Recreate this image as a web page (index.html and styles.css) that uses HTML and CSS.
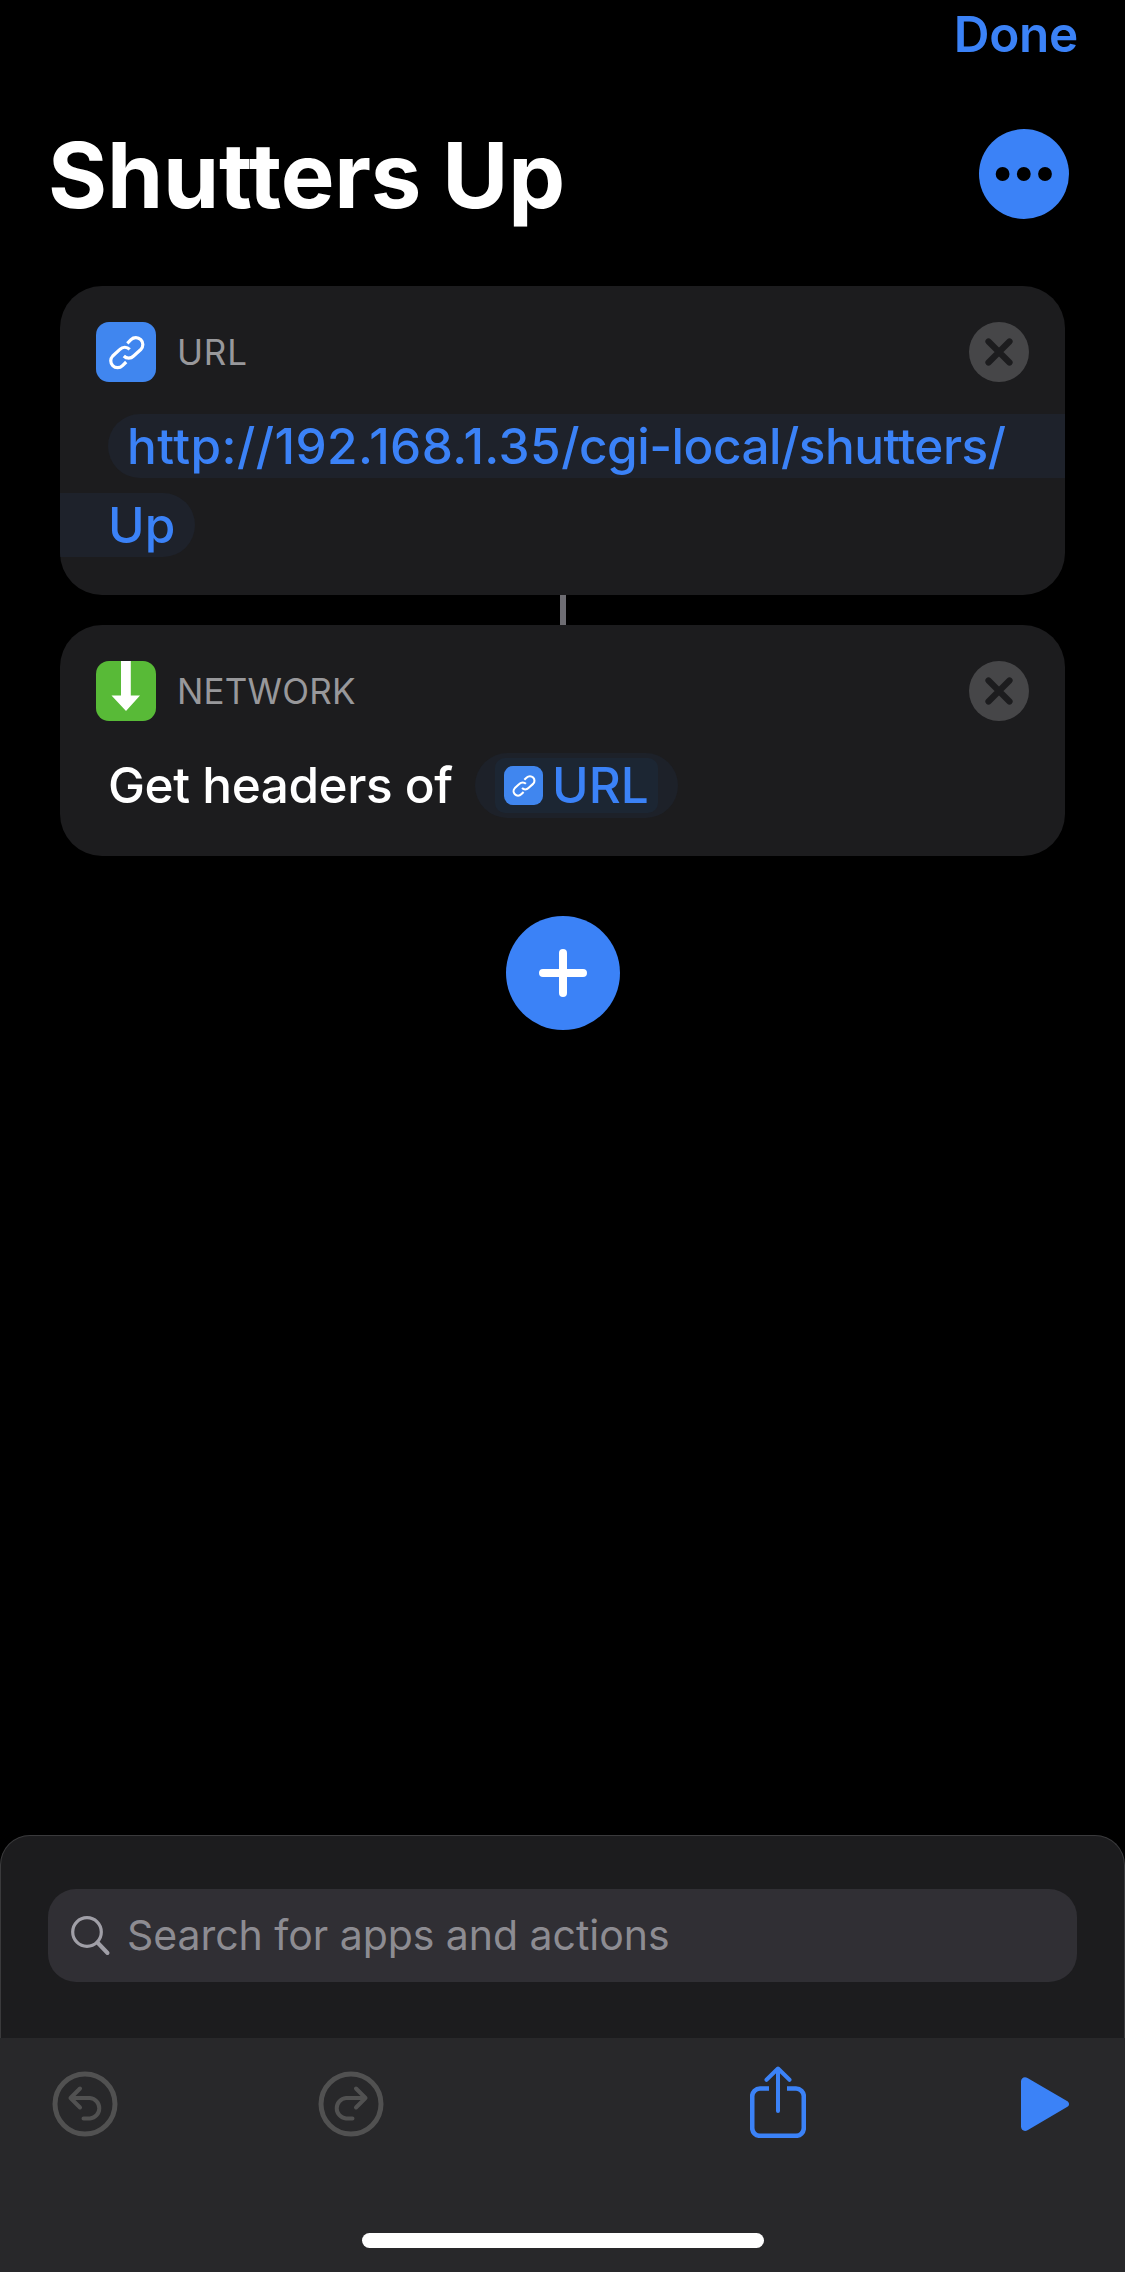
FILE: index.html
```html
<!DOCTYPE html>
<html lang="en">
<head>
<meta charset="utf-8">
<title>Shutters Up</title>
<link rel="stylesheet" href="styles.css">
</head>
<body>
<svg class="defs" width="0" height="0" aria-hidden="true">
  <symbol id="link" viewBox="0 0 60 60">
    <g fill="none" stroke="#fff" stroke-width="3.2" stroke-linejoin="round">
      <path d="M31.3 21.3L35 17.7a6.9 6.9 0 0 1 9.8 0a6.9 6.9 0 0 1 0 9.8L37.6 34a6.9 6.9 0 0 1-9.8 0"/>
      <path d="M33.7 27.3a6.9 6.9 0 0 0-9.8 0L16.7 34a6.9 6.9 0 0 0 0 9.6a6.9 6.9 0 0 0 9.8 0L30.2 40"/>
    </g>
  </symbol>
  <symbol id="close" viewBox="0 0 60 60">
    <circle cx="30" cy="30" r="30" fill="#464648"/>
    <path d="M19.5 19.5L40.5 40.5M40.5 19.5L19.5 40.5" stroke="#1c1c1e" stroke-width="6.2" stroke-linecap="round"/>
  </symbol>
  <symbol id="undo" viewBox="0 0 66 66">
    <g fill="none" stroke="#515151" stroke-linecap="round" stroke-linejoin="round">
      <circle cx="33" cy="33" r="30" stroke-width="5"/>
      <path d="M28 17.5L18.5 27L28 36.5M18.5 27H38a10.3 10.3 0 0 1 0 20.5H31.5" stroke-width="4"/>
    </g>
  </symbol>
</svg>
<div class="screen">
  <div class="nav"><span class="done">Done</span></div>
  <header class="header">
    <h1 class="title">Shutters Up</h1>
    <svg class="more" viewBox="0 0 90 90"><circle cx="45" cy="45" r="45" fill="#3b82f7"/><circle cx="23.6" cy="45" r="6.9"/><circle cx="44.8" cy="45" r="6.9"/><circle cx="66" cy="45" r="6.9"/></svg>
  </header>
  <main class="actions">
    <section class="card card-url">
      <div class="card-head">
        <svg class="app-icon blue"><use href="#link"/></svg>
        <span class="label label-url">URL</span>
        <svg class="close"><use href="#close"/></svg>
      </div>
      <div class="token-line start"><span class="host">http://192.168.1.35</span><span class="path">/cgi-local/shutters/</span></div>
      <div class="token-line end">Up</div>
    </section>
    <div class="connector"></div>
    <section class="card card-network">
      <div class="card-head">
        <svg class="app-icon green" viewBox="0 0 60 60"><path d="M25 0H34.8V34.5H44L30 50L15.5 34.5H25Z" fill="#fff"/></svg>
        <span class="label">NETWORK</span>
        <svg class="close"><use href="#close"/></svg>
      </div>
      <div class="sentence">
        <span class="verb">Get headers of</span>
        <span class="pill"><span class="pill-inner"><svg class="mini-icon"><use href="#link"/></svg><span>URL</span></span></span>
      </div>
    </section>
    <svg class="add" viewBox="0 0 114 114"><circle cx="57" cy="57" r="57" fill="#3b82f7"/><path d="M57 37V77M37 57H77" stroke="#fff" stroke-width="8" stroke-linecap="round"/></svg>
  </main>
  <section class="sheet">
    <div class="search">
      <svg class="glass" viewBox="0 0 40 40" fill="none" stroke="#a09fa7"><circle cx="16" cy="16" r="14.3" stroke-width="3.2"/><path d="M26.5 26.5L36.500 37" stroke-width="4" stroke-linecap="round"/></svg>
      <span class="placeholder">Search for apps and actions</span>
    </div>
  </section>
  <footer class="toolbar">
    <svg class="tool"><use href="#undo"/></svg>
    <svg class="tool redo"><use href="#undo"/></svg>
    <svg class="share" viewBox="0 0 56 72" fill="none" stroke="#3b82f7" stroke-width="4.6"><path d="M19 22.5H10a7.8 7.8 0 0 0-7.8 7.8V62a7.8 7.8 0 0 0 7.8 7.8H46a7.8 7.8 0 0 0 7.8-7.8V30.3a7.8 7.8 0 0 0-7.8-7.8H37"/><path d="M28 3V45M16.500 13.8L28 2.5L39.5 13.8" stroke-linecap="round" stroke-linejoin="round" stroke-width="4"/></svg>
    <svg class="play" viewBox="0 0 48 54"><path d="M0 4.5C0 .8 3.5-1 6.500 .9L46 24C48.700 25.700 48.700 28.500 46 30L6.500 53.200C3.500 55 0 53.200 0 49.500Z" fill="#3b82f7"/></svg>
  </footer>
  <div class="home"><div class="home-bar"></div></div>
</div>
</body>
</html>
```
FILE: styles.css
```css
* { box-sizing: border-box; }
body { margin: 0; background: #000; font-family: Inter, "Liberation Sans", sans-serif; }
svg { display: block; flex: none; }
.defs { position: absolute; }
.screen { display: flex; flex-direction: column; width: 1125px; height: 2272px; overflow: hidden; background: #000; color: #fff; }
.nav { display: flex; justify-content: flex-end; height: 68px; padding-right: 47px; }
.done { color: #3b82f7; font-size: 49.5px; line-height: 68px; font-weight: 600; letter-spacing: -0.3px; }
.header { display: flex; align-items: center; justify-content: space-between; height: 212px; padding: 0 56px 0 48px; }
.title { margin: 3px 0 0; font-size: 90.3px; line-height: 110px; font-weight: 700; letter-spacing: -0.2px; white-space: nowrap; }
.more { width: 90px; height: 90px; }
.actions { display: flex; flex-direction: column; align-items: center; padding-top: 6px; flex: 1; }
.card { width: 1005px; border-radius: 42px; background: #1c1c1e; overflow: hidden; }
.card-url { height: 309px; }
.card-network { height: 231px; }
.card-head { display: flex; align-items: center; padding: 36px 36px 0; }
.app-icon { width: 60px; height: 60px; border-radius: 13px; }
.blue { background: #4086ef; }
.green { background: #58ba37; }
.label { flex: 1; margin-left: 21px; font-size: 35px; line-height: 60px; letter-spacing: 0.2px; color: #98989b; }
.label-url { letter-spacing: 0.8px; }
.close { width: 60px; height: 60px; }
.token-line { width: fit-content; height: 64px; line-height: 65px; background: #1e222b; color: #3b82f7; font-size: 49.5px; font-weight: 500; white-space: nowrap; }
.start { width: auto; margin: 32px 0 0 48px; padding-left: 19px; border-radius: 32px 0 0 32px; }
.host { letter-spacing: 0.45px; }
.path { letter-spacing: -0.5px; }
.end { margin-top: 15px; padding: 0 20px 0 48px; border-radius: 0 32px 32px 0; }
.connector { width: 6px; height: 30px; background: #6e6d73; }
.sentence { display: flex; align-items: center; height: 65px; margin: 32px 0 0 48px; font-size: 49.5px; font-weight: 500; line-height: 65px; white-space: nowrap; }
.verb { width: 367px; letter-spacing: -0.45px; }
.pill { padding: 5px 20px; width: 203px; height: 65px; border-radius: 33px; background: #1d2129; color: #3b82f7; }
.pill-inner { display: flex; align-items: center; height: 55px; padding-left: 9px; border-radius: 10px; background: #1c2633; }
.mini-icon { width: 39px; height: 39px; border-radius: 9px; background: #4086ef; margin-right: 9px; }
.add { width: 114px; height: 114px; margin-top: 60px; }
.sheet { height: 203px; padding: 53px 47px 0; border: 1px solid #3a3a3c; border-bottom: 0; border-radius: 30px 30px 0 0; background: #1c1c1e; }
.search { display: flex; align-items: center; height: 93px; padding-left: 23px; border-radius: 28px; background: #302f34; }
.glass { width: 40px; height: 40px; }
.placeholder { margin-left: 16px; color: #8d8c92; font-size: 41px; line-height: 93px; letter-spacing: -0.04px; white-space: nowrap; }
.toolbar { display: flex; height: 175px; padding-top: 28px; background: #28282a; }
.tool { width: 66px; height: 66px; margin: 5px 0 0 51.500px; }
.redo { margin-left: 200px; transform: scaleX(-1); }
.share { width: 56px; height: 72px; margin-left: 366.500px; }
.play { width: 48px; height: 54px; margin: 11px 0 0 215px; }
.home { display: flex; justify-content: center; height: 59px; padding-top: 20px; background: #28282a; }
.home-bar { width: 402px; height: 15px; border-radius: 8px; background: #fff; }
```
